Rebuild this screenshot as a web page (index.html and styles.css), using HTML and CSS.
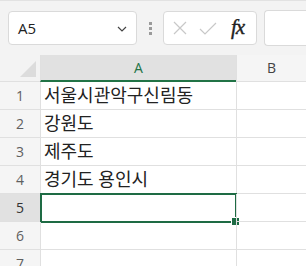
FILE: index.html
```html
<!DOCTYPE html>
<html lang="ko">
<head>
  <meta charset="UTF-8" />
  <title>시트</title>
  <link rel="stylesheet" href="styles.css">
</head>
<body>
  <div class="toolbar">
    <div class="name-box">
      <span>A5</span>
      <svg class="chevron" width="10" height="6" viewBox="0 0 10 6"><path d="M1 1l4 4 4-4" fill="none" stroke="#444" stroke-width="1.2"/></svg>
    </div>
    <div class="grip"><i></i><i></i><i></i></div>
    <div class="fx-box">
      <svg width="16" height="16" viewBox="0 0 16 16"><path d="M2 2l12 12M14 2L2 14" stroke="#c8c8c8" stroke-width="1.2"/></svg>
      <svg width="18" height="16" viewBox="0 0 18 16"><path d="M1 9l5 5L17 3" fill="none" stroke="#c8c8c8" stroke-width="1.2"/></svg>
      <span class="fx">fx</span>
    </div>
    <div class="formula"></div>
  </div>

  <div class="sheet">
    <div class="corner"><span class="tri"></span></div>
    <div class="col-head active">A</div>
    <div class="col-head">B</div>

    <div class="row-head">1</div><div class="cell">서울시관악구신림동</div><div class="cell"></div>
    <div class="row-head">2</div><div class="cell">강원도</div><div class="cell"></div>
    <div class="row-head">3</div><div class="cell">제주도</div><div class="cell"></div>
    <div class="row-head">4</div><div class="cell">경기도 용인시</div><div class="cell"></div>
    <div class="row-head active">5</div><div class="cell selected"><span class="handle"></span></div><div class="cell"></div>
    <div class="row-head">6</div><div class="cell"></div><div class="cell"></div>
    <div class="row-head">7</div><div class="cell"></div><div class="cell"></div>
  </div>
</body>
</html>
```

FILE: styles.css
```css
body {
  margin: 0;
  width: 306px;
  height: 266px;
  overflow: hidden;
  background: #f3f3f3;
  font-family: "Open Sans", "Noto Sans CJK KR", sans-serif;
  color: #222;
}
.toolbar {
  height: 55px;
  border-top: 1px solid #e2e2e2;
  display: flex;
  align-items: center;
  padding-left: 8px;
  box-sizing: border-box;
}
.name-box {
  width: 129px;
  height: 34px;
  box-sizing: border-box;
  background: white;
  border: 1px solid #dadada;
  border-radius: 4px;
  display: flex;
  align-items: center;
  justify-content: space-between;
  padding: 0 9px 0 9px;
  font-size: 15px;
}
.chevron {
  margin-top: 2px;
}
.grip {
  width: 26px;
  display: flex;
  flex-direction: column;
  align-items: center;
  gap: 2px;
}
.grip i {
  width: 3px;
  height: 3px;
  background: #9a9a9a;
}
.fx-box {
  width: 94px;
  height: 34px;
  box-sizing: border-box;
  background: white;
  border: 1px solid #dadada;
  border-radius: 4px;
  display: flex;
  align-items: center;
  padding-left: 8px;
  gap: 11px;
}
.fx {
  font-family: "Liberation Serif", serif;
  font-style: italic;
  font-size: 21px;
  color: #222;
  margin-left: 3px;
  margin-top: -2px;
  letter-spacing: -1px;
  -webkit-text-stroke: 0.4px #222;
}
.formula {
  margin-left: 7px;
  flex: 1;
  height: 34px;
  background: white;
  border: 1px solid #dadada;
  border-right: none;
  border-radius: 4px 0 0 4px;
}
.sheet {
  display: grid;
  grid-template-columns: 40px 196px 1fr;
  grid-template-rows: 27px repeat(7, 28px);
  background: white;
}
.corner {
  background: #f3f3f3;
  border-bottom: 1px solid #e0e0e0;
  position: relative;
}
.tri {
  position: absolute;
  right: 4px;
  bottom: 4px;
  width: 0;
  height: 0;
  border-left: 16px solid transparent;
  border-bottom: 16px solid #dcdcdc;
}
.col-head {
  background: #f5f5f5;
  border-left: 1px solid #e0e0e0;
  border-bottom: 1px solid #e0e0e0;
  text-align: center;
  font-size: 14px;
  line-height: 26px;
  color: #444;
}
.col-head.active {
  background: #e1e1e1;
  color: #217346;
  border-bottom: 2px solid #217346;
  line-height: 25px;
}
.row-head {
  background: #f5f5f5;
  border-bottom: 1px solid #e0e0e0;
  text-align: center;
  font-size: 14px;
  line-height: 28px;
  color: #5f5f5f;
}
.row-head.active {
  background: #e1e1e1;
  color: #333;
}
.cell {
  border-left: 1px solid #e0e0e0;
  border-bottom: 1px solid #e0e0e0;
  font-size: 18px;
  line-height: 27px;
  padding-left: 3px;
  white-space: nowrap;
  position: relative;
}
.cell.selected {
  border: 2px solid #1e6b44;
  margin: -1px -1px -1px 0;
}
.handle {
  position: absolute;
  right: -5px;
  bottom: -5px;
  width: 7px;
  height: 7px;
  background: #1e6b44;
  border: 1px solid white;
}
```
